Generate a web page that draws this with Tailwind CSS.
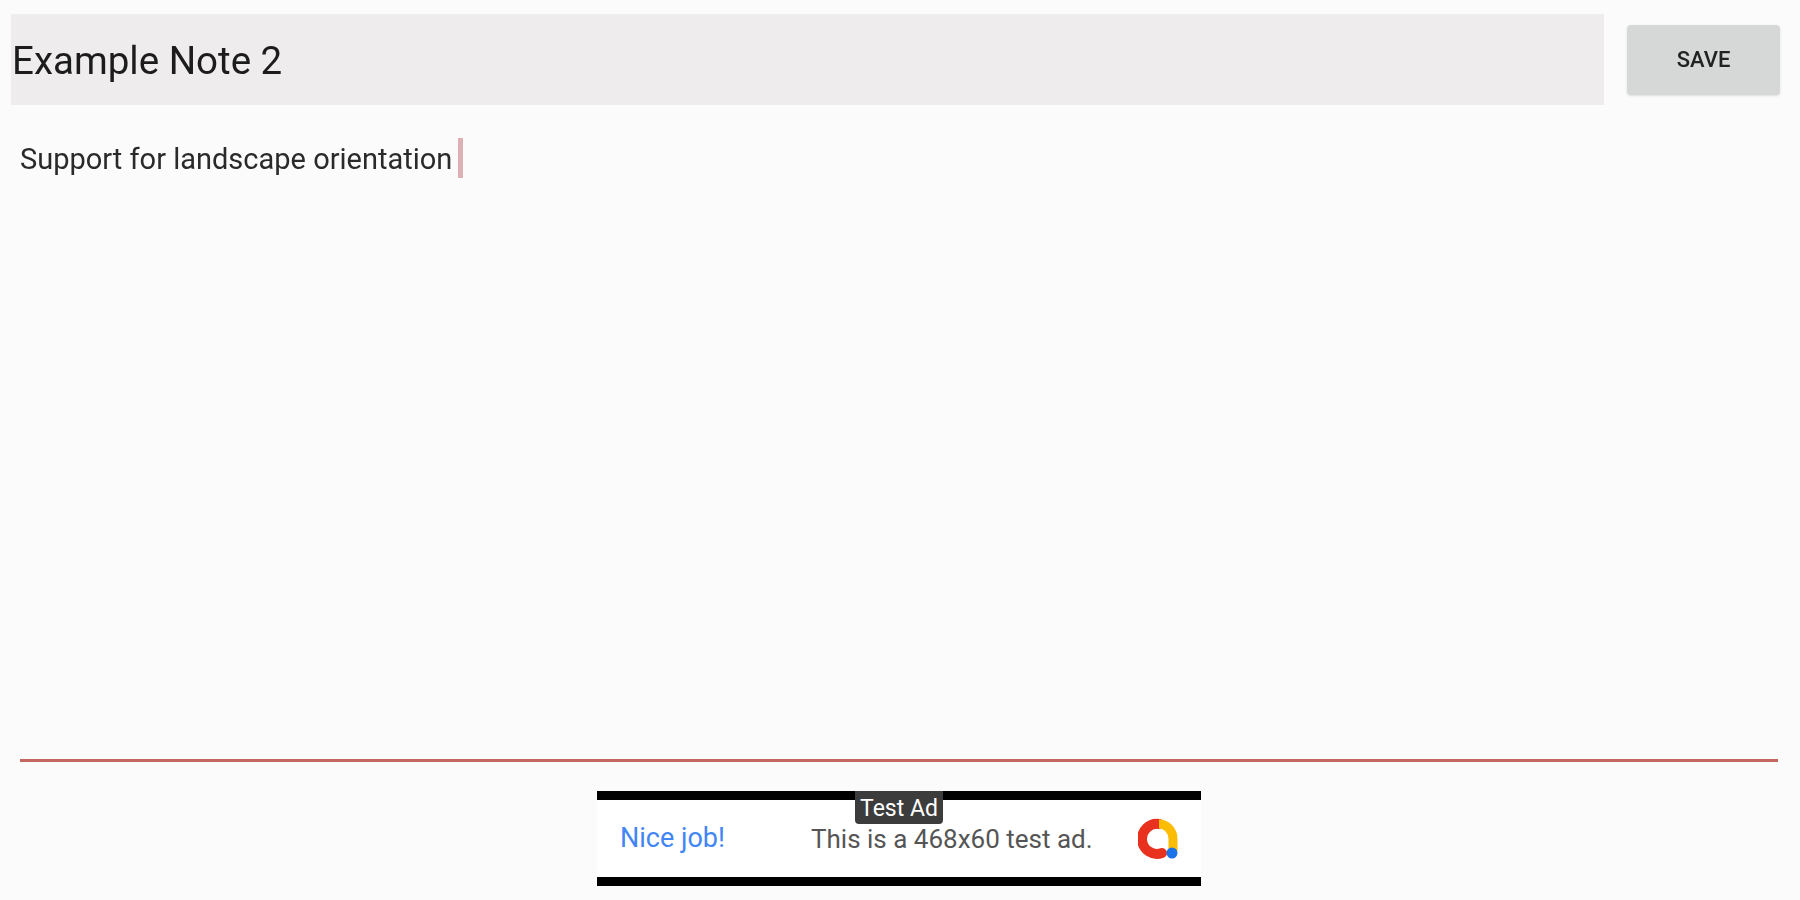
<!DOCTYPE html>
<html lang="en">
<head>
  <meta charset="UTF-8" />
  <title>Edit Note</title>
  <script src="https://cdn.jsdelivr.net/npm/@tailwindcss/browser@4"></script>
</head>
<body class="bg-[#fbfbfb] font-['Roboto',sans-serif] overflow-hidden">
  <div class="h-[900px] w-[1800px] flex flex-col blur-[0.6px]">
    <!-- title row -->
    <div class="flex items-center pl-[11px] pr-5 pt-[14px]">
      <div class="w-[1593px] h-[91px] bg-[#eeecec] flex items-center pl-px pt-[2px] text-[38.5px] text-[#1c1c1c]">Example Note 2</div>
      <button class="ml-[23px] w-[153px] h-[70px] rounded-[4px] bg-[#d6d8d7] text-[22px] font-medium text-[#222] shadow-sm">SAVE</button>
    </div>
    <!-- note body -->
    <div class="flex-1 pl-5 pt-[33px]">
      <div class="flex items-center h-10 text-[29px] text-[#2a2a2a]">
        <span class="pt-1">Support for landscape orientation</span>
        <span class="ml-[6px] w-[5px] h-10 bg-[#dcb0b4]"></span>
      </div>
    </div>
    <div class="ml-5 mr-[22px] h-[3px] bg-[#c4675f]"></div>
    <!-- ad banner -->
    <div class="flex justify-center pt-[29px] pb-[14px] pr-[2px]">
      <div class="relative w-[604px] h-[95px] bg-white border-y-[9px] border-black flex items-center">
        <span class="ml-[23px] w-[191px] text-[27px] text-[#4285f4]">Nice job!</span>
        <span class="w-[327px] pt-px text-[26px] text-[#555]">This is a 468x60 test ad.</span>
        <svg class="w-[42px] h-[42px]" viewBox="0 0 42 42" fill="none">
          <path d="M24 35 A15 15 0 1 1 21 6" stroke="#e8321f" stroke-width="10" stroke-linecap="round" />
          <path d="M21 6 A14 15 0 0 1 35 21 V33" stroke="#fbbc04" stroke-width="9" />
          <circle cx="34" cy="35" r="5.5" fill="#1a73e8" />
        </svg>
        <div class="absolute left-[258px] top-[-9px] w-[88px] h-[33px] pt-[2px] rounded-b-[4px] bg-[#3c3c3c] text-white text-[23px] leading-[31px] text-center">Test Ad</div>
      </div>
    </div>
  </div>
</body>
</html>
